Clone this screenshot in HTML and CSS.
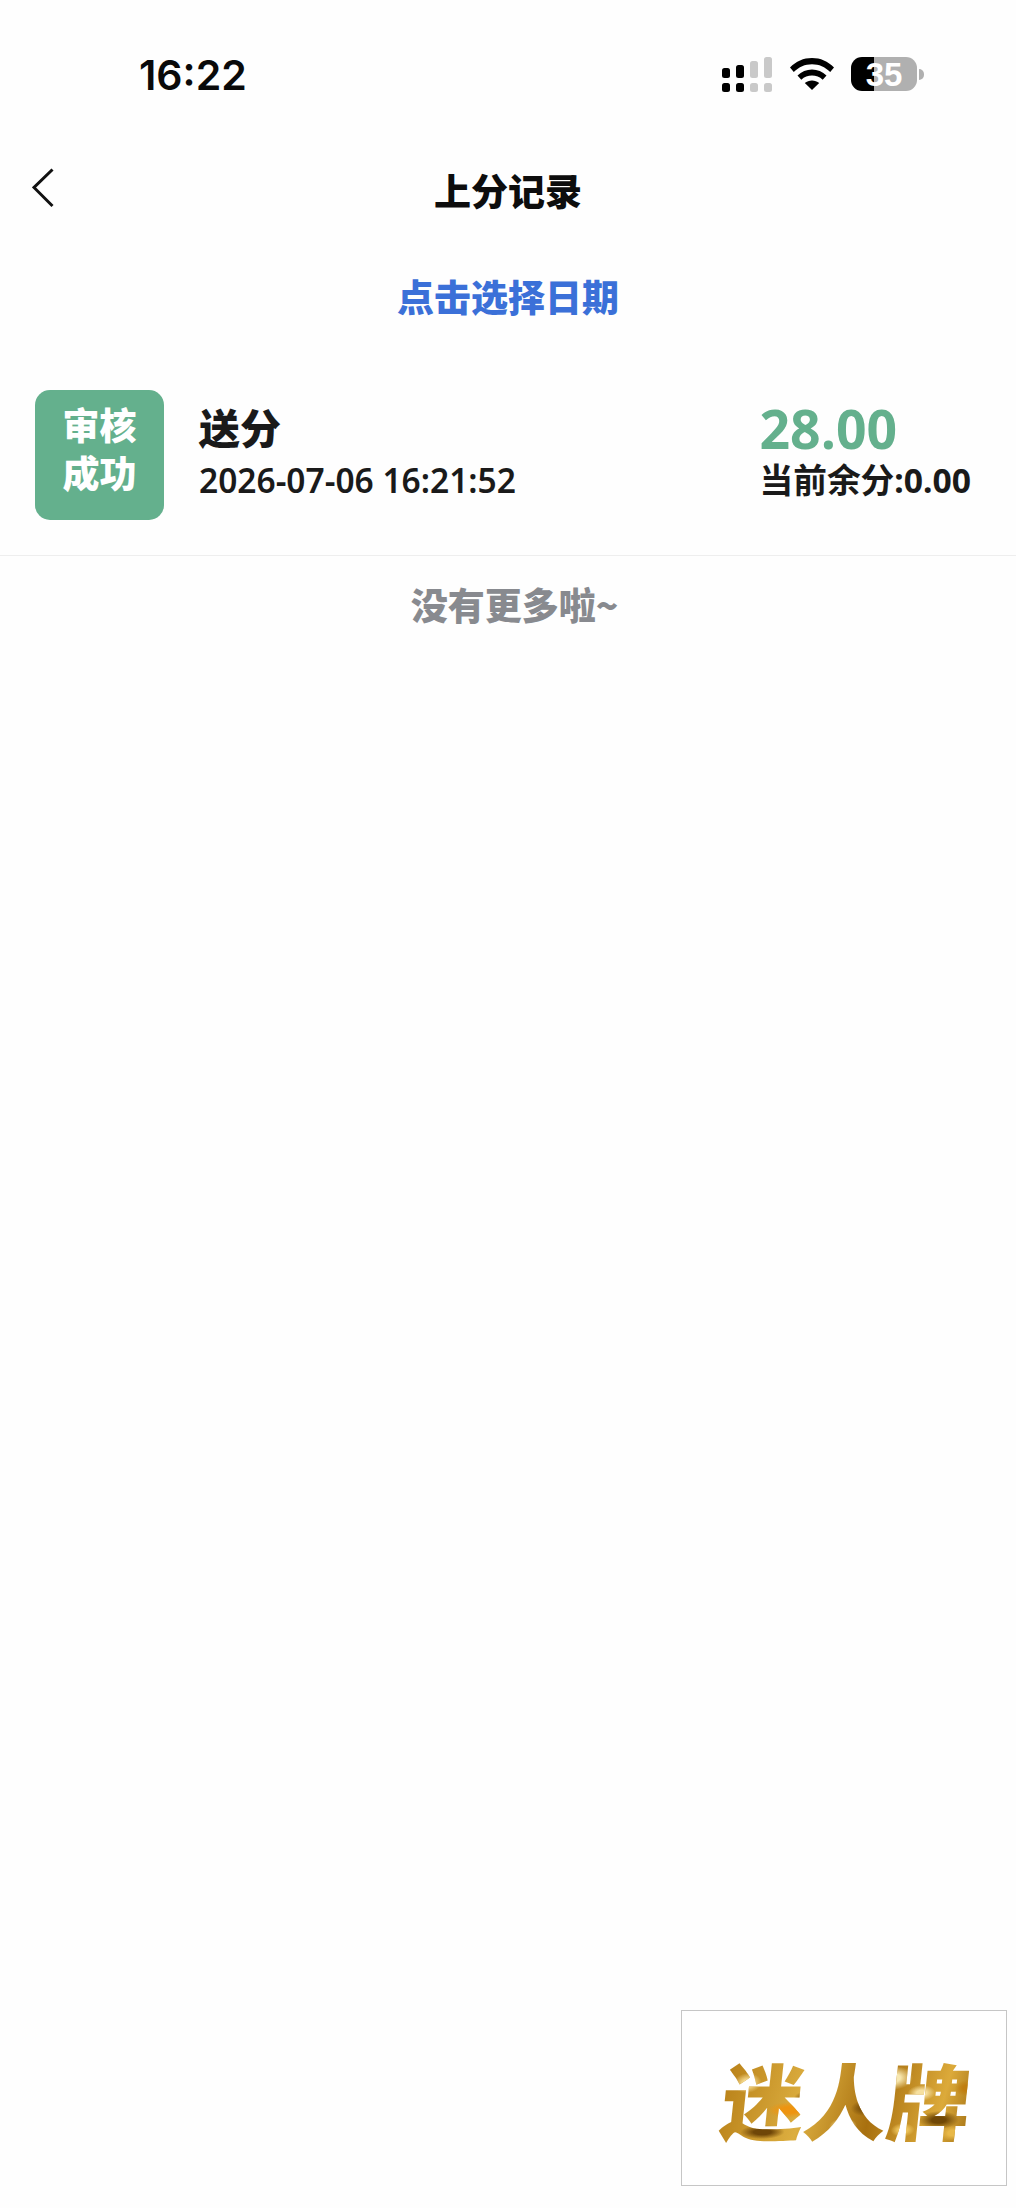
FILE: index.html
```html
<!DOCTYPE html>
<html lang="zh-CN">
<head>
	<meta charset="UTF-8">
	<title>上分记录</title>
	<link rel="stylesheet" href="styles.css">
</head>
<body>
	<div class="status-bar">
		<span class="clock">16:22</span>
		<div class="status-icons">
			<svg class="signal" width="50" height="36" viewBox="0 0 50 36">
				<g fill="#000">
					<rect x="0" y="11" width="8" height="10" rx="2.5"/>
					<rect x="14" y="8" width="8" height="13" rx="2.5"/>
					<rect x="0" y="26" width="8" height="9" rx="2.5"/>
					<rect x="14" y="26" width="8" height="9" rx="2.5"/>
				</g>
				<g fill="#c9c9c9">
					<rect x="28" y="4" width="8" height="17" rx="2.5"/>
					<rect x="42" y="0" width="8" height="21" rx="2.5"/>
					<rect x="28" y="26" width="8" height="9" rx="2.5"/>
					<rect x="42" y="26" width="8" height="9" rx="2.5"/>
				</g>
			</svg>
			<svg class="wifi" width="44" height="32" viewBox="0 0 44 32">
				<path d="M22 0C13.500 0 6 3.300 0 9.500L3.800 14C9 9 15 6.300 22 6.300S35 9 40.200 14L44 9.500C38 3.300 30.500 0 22 0Z" fill="#000"/>
				<path d="M22 11.500C16.500 11.500 11.500 13.600 7.500 17.500L11.300 21.800C14.300 19 18 17.600 22 17.600S29.700 19 32.700 21.800L36.500 17.500C32.500 13.600 27.500 11.500 22 11.500Z" fill="#000"/>
				<path d="M22 22.500C19.200 22.500 16.800 23.400 14.800 25.100L22 32L29.200 25.100C27.200 23.400 24.800 22.500 22 22.500Z" fill="#000"/>
			</svg>
			<div class="battery"><span>35</span></div>
			<i class="battery-nub"></i>
		</div>
	</div>

	<div class="nav">
		<svg class="back" width="22" height="40" viewBox="0 0 22 40">
			<path d="M20.500 1.500L2 19.500L20.500 38" fill="none" stroke="#111" stroke-width="3"/>
		</svg>
		<h1 class="nav-title">上分记录</h1>
	</div>

	<div class="date-pick">点击选择日期</div>

	<div class="record">
		<div class="record-badge">审核<br>成功</div>
		<div class="record-main">
			<div class="record-type">送分</div>
			<div class="record-time">2026-07-06 16:21:52</div>
		</div>
		<div class="record-side">
			<div class="record-amount">28.00</div>
			<div class="record-balance">当前余分:0.00</div>
		</div>
	</div>

	<div class="no-more">没有更多啦~</div>

	<div class="float-logo"><span class="logo-text">迷人牌</span></div>
</body>
</html>
```

FILE: styles.css
```css
* {
	box-sizing: border-box;
}
html, body {
	height: 100%;
}
body {
	margin: 0;
	overflow: hidden;
	background: #fefefe;
	color: #1a1a1a;
	font-family: "Noto Sans", "Noto Sans CJK SC", sans-serif;
}

/* status bar */
.status-bar {
	display: flex;
	justify-content: space-between;
	align-items: flex-start;
	height: 147px;
	padding: 51px 92px 0 139px;
}
.clock {
	font-family: Inter, sans-serif;
	font-size: 41px;
	line-height: 48px;
	font-weight: 600;
	color: #0a0a0a;
}
.status-icons {
	display: flex;
	align-items: flex-start;
	padding-top: 6px;
}
.wifi {
	margin: 1px 17px 0 18px;
}
.battery {
	width: 66px;
	height: 34px;
	border-radius: 11px;
	background: linear-gradient(90deg, #000 0, #000 23px, #b0b0b0 23px);
	text-align: center;
	font: 700 33px/35px "Liberation Sans", sans-serif;
	color: #fff;
}
.battery-nub {
	width: 5px;
	height: 11px;
	margin: 12px 0 0 2px;
	border-radius: 0 5px 5px 0;
	background: #b0b0b0;
}

/* nav */
.nav {
	display: flex;
	justify-content: center;
	align-items: center;
	height: 86px;
	position: relative;
}
.back {
	position: absolute;
	left: 32px;
	top: 21px;
}
.nav-title {
	margin: 0;
	font-size: 37px;
	line-height: 86px;
	font-weight: 900;
	font-family: "Noto Sans CJK SC", sans-serif;
	color: #0d0d0d;
}
.date-pick {
	margin-top: 36px;
	text-align: center;
	font-family: "Noto Sans CJK SC", sans-serif;
	font-size: 37px;
	line-height: 54px;
	font-weight: 900;
	color: #3b70d8;
}

/* record row */
.record {
	display: flex;
	align-items: center;
	margin-top: 43px;
	padding: 24px 45px 35px 35px;
	border-bottom: 1px solid #eeeeee;
}
.record-badge {
	width: 129px;
	height: 130px;
	flex: none;
	border-radius: 15px;
	background: #64b08d;
	color: #fff;
	text-align: center;
	font-family: "Noto Sans CJK SC", sans-serif;
	font-size: 37px;
	line-height: 48px;
	font-weight: 900;
	padding-top: 10px;
}
.record-main {
	margin-left: 35px;
	padding-bottom: 9px;
	flex: 1;
}
.record-type {
	margin-bottom: 3px;
	font-family: "Noto Sans CJK SC", sans-serif;
	font-size: 41px;
	line-height: 56px;
	font-weight: 900;
}
.record-time {
	font-size: 33.500px;
	line-height: 46px;
	font-weight: 600;
}
.record-side {
	padding-bottom: 6px;
}
.record-amount {
	font-family: "Open Sans", sans-serif;
	font-size: 53.500px;
	line-height: 56px;
	font-weight: 700;
	color: #64b08d;
}
.record-balance {
	font-size: 33.700px;
	line-height: 46px;
	font-weight: 700;
	white-space: nowrap;
}
.no-more {
	margin-top: 21px;
	padding-left: 13px;
	text-align: center;
	font-family: "Noto Sans CJK SC", sans-serif;
	font-size: 37px;
	line-height: 54px;
	font-weight: 900;
	color: #888a8f;
}

/* floating logo, sits over the page */
.float-logo {
	position: absolute;
	left: 681px;
	top: 2010px;
	display: flex;
	justify-content: center;
	align-items: center;
	width: 326px;
	height: 176px;
	padding-left: 5px;
	border: 1px solid #c6c6c6;
	background: #fff;
}
.logo-text {
	display: block;
	padding: 0 6px;
	transform: skewX(-6deg);
	font-family: "Noto Sans CJK SC", sans-serif;
	font-size: 83px;
	line-height: 100px;
	font-weight: 900;
	background:
		radial-gradient(ellipse 22px 8px at 75px 62px, #ee9410 0 40%, rgba(238,148,16,0) 100%),
		radial-gradient(ellipse 20px 12px at 175px 30px, #f8e8b0 0 35%, rgba(248,232,176,0) 100%),
		radial-gradient(ellipse 22px 7px at 50px 84px, #6f4608 0 40%, rgba(111,70,8,0) 100%),
		radial-gradient(ellipse 20px 9px at 225px 72px, #704806 0 35%, rgba(112,72,6,0) 100%),
		radial-gradient(ellipse 14px 8px at 130px 78px, #f6df9a 0 35%, rgba(246,223,154,0) 100%),
		radial-gradient(ellipse 14px 10px at 30px 35px, #f4d98e 0 35%, rgba(244,217,142,0) 100%),
		radial-gradient(ellipse 12px 10px at 105px 35px, #f8eab8 0 35%, rgba(248,234,184,0) 100%),
		radial-gradient(ellipse 14px 8px at 205px 45px, #f6e0a0 0 35%, rgba(246,224,160,0) 100%),
		radial-gradient(ellipse 14px 8px at 150px 60px, #7d520c 0 35%, rgba(125,82,12,0) 100%),
		radial-gradient(ellipse 12px 8px at 250px 40px, #c07e10 0 35%, rgba(192,126,16,0) 100%),
		radial-gradient(ellipse 12px 7px at 90px 50px, #8a5c0e 0 35%, rgba(138,92,14,0) 100%),
		radial-gradient(ellipse 12px 8px at 240px 85px, #e8b848 0 35%, rgba(232,184,72,0) 100%),
		radial-gradient(ellipse 12px 7px at 190px 82px, #f0c860 0 35%, rgba(240,200,96,0) 100%),
		linear-gradient(100deg, #b57c14, #dcae40 35%, #a8700f 60%, #dcaa3a 85%, #9c6a10);
	-webkit-background-clip: text;
	background-clip: text;
	color: transparent;
}
```
